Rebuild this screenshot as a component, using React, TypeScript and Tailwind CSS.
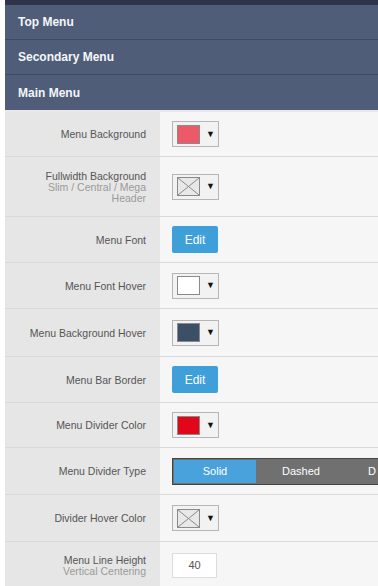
import React from "react";

const font = { fontFamily: '"Liberation Sans", Arial, sans-serif' };

function Swatch({ color }: { color?: string }) {
  return (
    <div className="flex h-[26px] w-[47px] items-center border border-[#b5b5b5] bg-[#f2f2f2] pl-[4px]">
      {color ? (
        <div className="h-[19px] w-[23px] border border-[#8a8a8a]" style={{ backgroundColor: color }} />
      ) : (
        <svg width="23" height="19" viewBox="0 0 23 19" className="block">
          <rect x="0.5" y="0.5" width="22" height="18" fill="#e8e8e8" stroke="#8a8a8a" />
          <line x1="1" y1="1" x2="22" y2="18" stroke="#8a8a8a" strokeWidth="1" />
          <line x1="22" y1="1" x2="1" y2="18" stroke="#8a8a8a" strokeWidth="1" />
        </svg>
      )}
      <span className="ml-[6px] text-[9px] leading-none text-[#111]">▼</span>
    </div>
  );
}

function EditBtn() {
  return (
    <div className="flex h-[27px] w-[46px] items-center justify-center rounded-[2px] bg-[#3f9fd8] text-[12px] text-white">
      Edit
    </div>
  );
}

function Row({
  label,
  sub,
  h,
  children,
}: {
  label: string;
  sub?: string[];
  h: string;
  children: React.ReactNode;
}) {
  return (
    <div className={`flex ${h} border-b border-[#d9d9d9]`}>
      <div className="flex w-[155px] flex-col items-end justify-center bg-[#e6e6e6] pr-[14px] text-right">
        <div className="text-[10.5px] leading-[12px] text-[#555]">{label}</div>
        {sub?.map((s) => (
          <div key={s} className="text-[10.5px] leading-[11px] text-[#9a9a9a]">
            {s}
          </div>
        ))}
      </div>
      <div className="flex flex-1 items-center bg-[#f6f6f6] pl-[12px]">{children}</div>
    </div>
  );
}

export default function App() {
  return (
    <div className="h-[586px] w-[378px] overflow-hidden bg-white pl-[5px]" style={font}>
      <div className="h-[5px] bg-[#30344a]" />
      {["Top Menu", "Secondary Menu", "Main Menu"].map((t, i) => (
        <div
          key={t}
          className={`flex h-[35px] items-center bg-[#4f5d78] pl-[13px] text-[12px] font-bold text-[#f4f6fa] ${
            i < 2 ? "border-b border-[#3e4a60]" : ""
          }`}
        >
          {t}
        </div>
      ))}
      <div className="h-[2px] bg-[#e9e9e9]" />
      <Row label="Menu Background" h="h-[45px]">
        <Swatch color="#ec5a68" />
      </Row>
      <Row label="Fullwidth Background" sub={["Slim / Central / Mega", "Header"]} h="h-[60px]">
        <Swatch />
      </Row>
      <Row label="Menu Font" h="h-[46px]">
        <EditBtn />
      </Row>
      <Row label="Menu Font Hover" h="h-[46px]">
        <Swatch color="#ffffff" />
      </Row>
      <Row label="Menu Background Hover" h="h-[48px]">
        <Swatch color="#3b4f66" />
      </Row>
      <Row label="Menu Bar Border" h="h-[46px]">
        <EditBtn />
      </Row>
      <Row label="Menu Divider Color" h="h-[45px]">
        <Swatch color="#e2061a" />
      </Row>
      <Row label="Menu Divider Type" h="h-[47px]">
        <div className="flex h-[27px] flex-1 border-y border-l border-[#444] bg-[#707070] p-[1px] text-[11px] text-white">
          <div className="flex w-[82px] items-center justify-center bg-[#4aa2dc]">Solid</div>
          <div className="flex w-[90px] items-center justify-center">Dashed</div>
          <div className="flex flex-1 items-center justify-end whitespace-nowrap pr-[1px]">
            <span>D</span>
          </div>
        </div>
      </Row>
      <Row label="Divider Hover Color" h="h-[47px]">
        <Swatch />
      </Row>
      <Row label="Menu Line Height" sub={["Vertical Centering"]} h="h-[47px]">
        <div className="flex h-[25px] w-[45px] items-center justify-center border border-[#dcdcdc] bg-white text-[11px] text-[#555]">
          40
        </div>
      </Row>
    </div>
  );
}
